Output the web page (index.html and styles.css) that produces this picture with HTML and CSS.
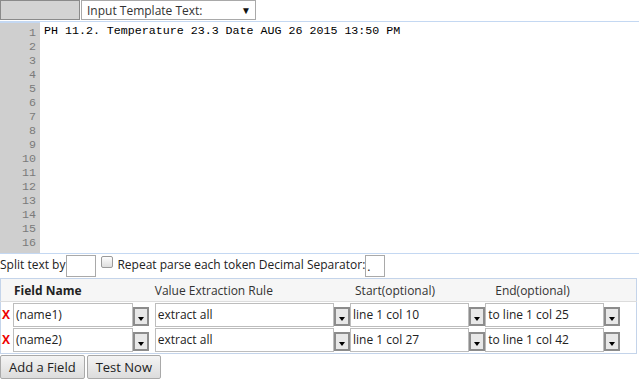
FILE: index.html
```html
<!DOCTYPE html>
<html lang="en">
<head>
  <meta charset="UTF-8" />
  <meta name="viewport" content="width=device-width, initial-scale=1.0"/>
  <title>Template Parser</title>
  <link rel="stylesheet" href="styles.css">
</head>
<body>

  <div class="topbar">
    <div class="tb-btn"></div>
    <div class="tpl-select">Input Template Text:<span class="caret">&#9660;</span></div>
  </div>

  <div class="editor">
    <div class="gutter" id="gutter"></div>
    <div class="code">PH 11.2. Temperature 23.3 Date AUG 26 2015 13:50 PM</div>
  </div>

  <div class="options">
    <span>Split text by</span>
    <span class="box split-box"></span>
    <span class="check"></span>
    <span class="repeat">Repeat parse each token</span>
    <span class="decimal">Decimal Separator:</span>
    <span class="box dec-box">.</span>
  </div>

  <table class="fields">
    <colgroup>
      <col class="col-name">
      <col class="col-rule">
      <col class="col-start">
      <col class="col-end">
    </colgroup>
    <thead>
      <tr>
        <th class="h-name"><b>Field Name</b></th>
        <th class="h-rule">Value Extraction Rule</th>
        <th class="h-start">Start(optional)</th>
        <th class="h-end">End(optional)</th>
      </tr>
    </thead>
    <tbody>
      <tr>
        <td><span class="del">X</span><span class="combo w-name"><span class="val">(name1)</span><span class="drop"></span></span></td>
        <td><span class="combo w-rule"><span class="val">extract all</span><span class="drop"></span></span></td>
        <td><span class="combo w-start"><span class="val">line 1 col 10</span><span class="drop"></span></span></td>
        <td><span class="combo w-end"><span class="val">to line 1 col 25</span><span class="drop"></span></span></td>
      </tr>
      <tr>
        <td><span class="del">X</span><span class="combo w-name"><span class="val">(name2)</span><span class="drop"></span></span></td>
        <td><span class="combo w-rule"><span class="val">extract all</span><span class="drop"></span></span></td>
        <td><span class="combo w-start"><span class="val">line 1 col 27</span><span class="drop"></span></span></td>
        <td><span class="combo w-end"><span class="val">to line 1 col 42</span><span class="drop"></span></span></td>
      </tr>
    </tbody>
  </table>

  <div class="actions">
    <button class="btn">Add a Field</button>
    <button class="btn">Test Now</button>
  </div>

  <script>
    const gutter = document.getElementById("gutter");
    for (let i = 1; i <= 17; i++) {
      const d = document.createElement("div");
      d.textContent = i;
      gutter.appendChild(d);
    }
  </script>
</body>
</html>
```

FILE: styles.css
```css
body {
  margin: 0;
  font-family: 'Open Sans', sans-serif;
  font-size: 12px;
  color: #222;
  background: #fff;
}

.topbar {
  display: flex;
  gap: 1px;
  height: 21px;
}

.tb-btn {
  width: 78px;
  height: 18px;
  background: #d3d3d3;
  border: 1px solid #8a8a8a;
}

.tpl-select {
  width: 168px;
  height: 18px;
  border: 1px solid #a9a9a9;
  padding: 0 0 0 5px;
  display: flex;
  align-items: center;
  justify-content: space-between;
  color: #333;
}

.caret {
  font-size: 10px;
  color: #111;
  padding-right: 4px;
}

.editor {
  display: flex;
  height: 231px;
  border-top: 1px solid #c4d8f2;
  border-bottom: 1px solid #c4d8f2;
  overflow: hidden;
  font-family: 'Liberation Mono', monospace;
  font-size: 11.65px;
  line-height: 14px;
}

.gutter {
  width: 36px;
  padding: 3px 4px 0 0;
  background: #cfcfcf;
  border-top: 2px solid #c4d8f2;
  margin-top: -1px;
  color: #7a7a7a;
  text-align: right;
  flex: none;
}

.code {
  padding: 2px 0 0 4px;
  color: #000;
  white-space: pre;
}

.options {
  display: flex;
  align-items: flex-start;
  height: 23px;
  padding-top: 1px;
  line-height: 20px;
  color: #222;
}

.box {
  display: inline-block;
  height: 20px;
  border: 1px solid #a9a9a9;
  box-sizing: content-box;
}

.split-box {
  width: 28px;
  margin-left: 1px;
}

.check {
  width: 10px;
  height: 10px;
  margin: 1px 4px 0 5px;
  border: 1px solid #9a9a9a;
  border-radius: 2px;
  background: linear-gradient(#fdfdfd, #dedede);
}

.decimal {
  margin-left: 3px;
}

.dec-box {
  width: 17px;
  padding-left: 1px;
  line-height: 22px;
}

.fields {
  border-collapse: collapse;
  table-layout: fixed;
  width: 637px;
  border: 1px solid #c4d4ea;
}

.col-name { width: 154px; }
.col-rule { width: 195px; }
.col-start { width: 135px; }
.col-end { width: 151px; }

.fields th {
  background: #f6f6f6;
  border-bottom: 1px solid #dcdcdc;
  font-weight: normal;
  text-align: left;
  height: 22px;
  padding: 0;
  color: #333;
  white-space: nowrap;
}

.fields th b {
  font-weight: bold;
  color: #222;
}

.fields th.h-name { padding-left: 13px; }
.fields th.h-rule { padding-left: 0; }
.fields th.h-start { padding-left: 5px; }
.fields th.h-end { padding-left: 10px; }

.fields td {
  padding: 0;
  height: 25px;
  vertical-align: top;
  white-space: nowrap;
}

.fields tbody tr:first-child td {
  padding-top: 1px;
}

.del {
  display: inline-block;
  width: 12px;
  padding-left: 1px;
  box-sizing: border-box;
  color: #e00;
  font-weight: bold;
  vertical-align: top;
  line-height: 23px;
}

.combo {
  display: inline-flex;
  align-items: center;
  vertical-align: top;
}

.combo .val {
  height: 24px;
  line-height: 22px;
  border: 1px solid #bdbdbd;
  padding-left: 2px;
  box-sizing: border-box;
  white-space: nowrap;
  color: #222;
}

.w-name .val { width: 120px; }
.w-rule .val { width: 179px; }
.w-start .val { width: 119px; }
.w-end .val { width: 119px; }

.drop {
  width: 16px;
  height: 19px;
  box-sizing: border-box;
  border: 2px solid #8c8c8c;
  background: #e8e8e8;
  display: flex;
  align-items: flex-end;
  justify-content: center;
  padding-bottom: 3px;
  margin-top: 2px;
}

.drop::after {
  content: "";
  border-left: 3px solid transparent;
  border-right: 3px solid transparent;
  border-top: 4px solid #000;
}

.actions {
  display: flex;
  gap: 2px;
  padding-top: 1px;
}

.btn {
  font-family: 'Open Sans', sans-serif;
  font-size: 13px;
  color: #222;
  height: 24px;
  padding: 0 8px;
  border: 1px solid #a9a9a9;
  border-radius: 2px;
  background: linear-gradient(#f4f4f4, #dcdcdc);
}
```
